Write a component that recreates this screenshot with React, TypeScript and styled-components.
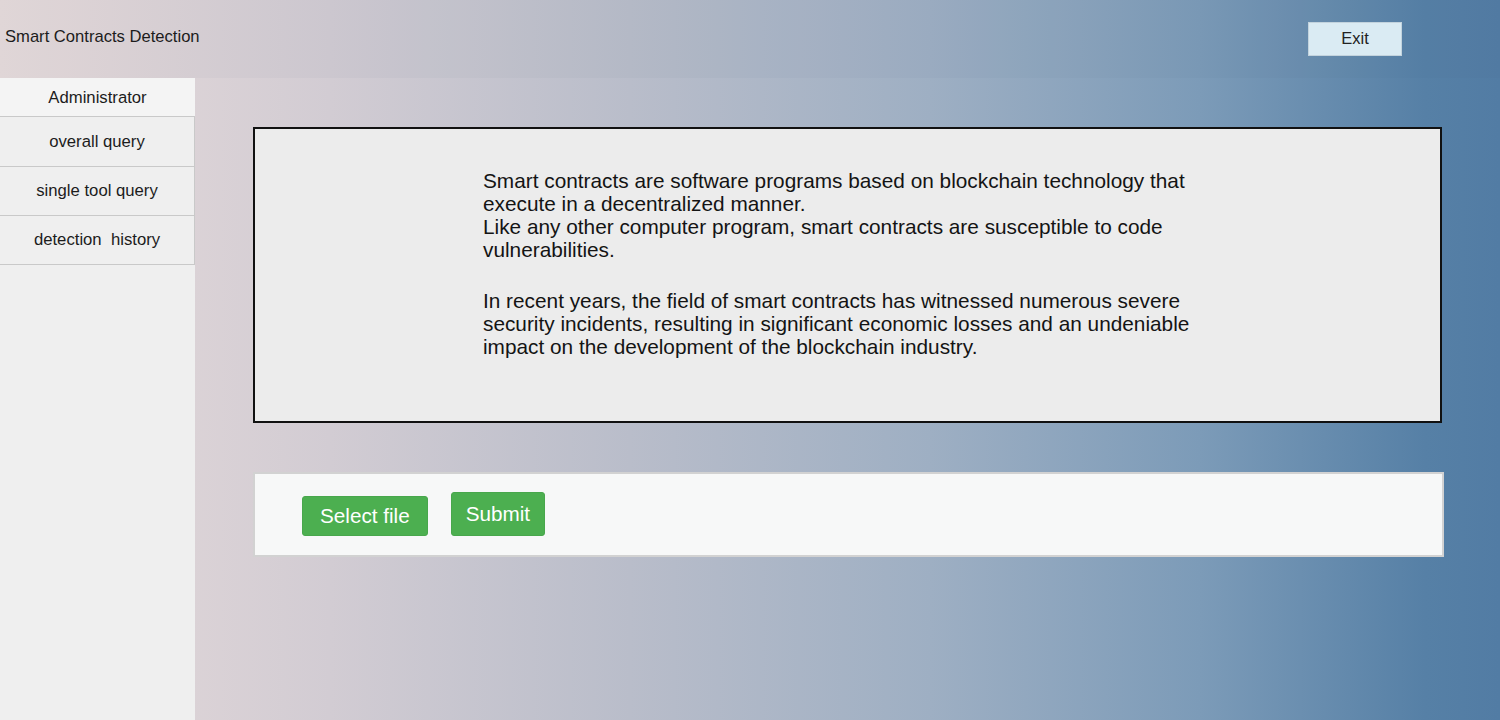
import * as React from 'react';
import styled, { createGlobalStyle } from 'styled-components';

const GlobalStyle = createGlobalStyle`
  html, body {
    margin: 0;
    padding: 0;
    height: 100%;
  }
  body {
    font-family: 'Liberation Sans', Arial, sans-serif;
    color: #1c1c1c;
  }
  #root {
    height: 100%;
  }
`;

const Page = styled.div`
  height: 720px;
  display: flex;
  flex-direction: column;
  background: linear-gradient(
    to right,
    #e7dbdb 0%,
    #d2ccd3 22%,
    #b9bdca 42%,
    #9eafc3 62%,
    #7c9bb8 80%,
    #5680a6 95%,
    #527ca4 100%
  );
  overflow: hidden;
`;

const TopBar = styled.header`
  height: 78px;
  flex-shrink: 0;
  display: flex;
  align-items: center;
  justify-content: space-between;
  padding: 0 98px 0 5px;
  background: rgba(70, 80, 110, 0.035);
`;

const Title = styled.div`
  font-size: 16.6px;
  margin-top: -5px;
`;

const ExitButton = styled.button`
  width: 94px;
  height: 34px;
  margin-top: -1px;
  background: #daebf3;
  border: 1px solid #c3d3dd;
  font-family: inherit;
  font-size: 16.5px;
  color: #222;
  cursor: pointer;
`;

const Body = styled.div`
  flex: 1;
  display: flex;
  min-height: 0;
`;

const Sidebar = styled.nav`
  width: 195px;
  flex-shrink: 0;
  background: #efefef;
  display: flex;
  flex-direction: column;
`;

const SideHead = styled.div`
  height: 38px;
  padding-top: 2px;
  box-sizing: border-box;
  display: flex;
  align-items: center;
  justify-content: center;
  background: #f4f4f4;
  font-size: 16.7px;
`;

const SideItem = styled.div`
  height: 48px;
  display: flex;
  align-items: center;
  justify-content: center;
  border-top: 1px solid #c9c9c9;
  border-right: 1px solid #c9c9c9;
  font-size: 16.7px;
  white-space: pre;
  cursor: pointer;
  &:first-child {
    height: 49px;
  }
  &:last-child {
    border-bottom: 1px solid #c9c9c9;
  }
`;

const Main = styled.main`
  flex: 1;
  padding: 49px 58px 0 58px;
  display: flex;
  flex-direction: column;
  gap: 49px;
`;

const InfoBox = styled.section`
  height: 296px;
  box-sizing: border-box;
  border: 2px solid #111;
  background: #ececec;
  padding: 40px 0 0 228px;
`;

const InfoText = styled.div`
  width: 720px;
  font-size: 20.8px;
  line-height: 23px;
  color: #141414;
`;

const Para = styled.p`
  margin: 0 0 28px;
`;

const UploadPanel = styled.section`
  height: 85px;
  box-sizing: border-box;
  margin-right: -2px;
  border: 2px solid #d2d2d2;
  background: #f7f8f8;
  display: flex;
  align-items: center;
  gap: 23px;
  padding-left: 47px;
`;

const GreenButton = styled.button<{ $tall?: boolean }>`
  height: ${p => (p.$tall ? '44px' : '40px')};
  margin-top: ${p => (p.$tall ? '-1px' : '2px')};
  padding: 0 ${p => (p.$tall ? '14px' : '17px')};
  background: #4caf50;
  border: 1px solid #48a74c;
  border-radius: 3px;
  color: #fff;
  font-family: inherit;
  font-size: 20.7px;
  cursor: pointer;
`;

const menu = ['overall query', 'single tool query', 'detection  history'];

export default function App() {
  return (
    <Page>
      <GlobalStyle />
      <TopBar>
        <Title>Smart Contracts Detection</Title>
        <ExitButton>Exit</ExitButton>
      </TopBar>
      <Body>
        <Sidebar>
          <SideHead>Administrator</SideHead>
          <div>
            {menu.map(m => (
              <SideItem key={m}>{m}</SideItem>
            ))}
          </div>
        </Sidebar>
        <Main>
          <InfoBox>
            <InfoText>
              <Para>
                Smart contracts are software programs based on blockchain technology that
                execute in a decentralized manner.
                <br />
                Like any other computer program, smart contracts are susceptible to code
                vulnerabilities.
              </Para>
              <Para>
                In recent years, the field of smart contracts has witnessed numerous severe
                security incidents, resulting in significant economic losses and an undeniable
                impact on the development of the blockchain industry.
              </Para>
            </InfoText>
          </InfoBox>
          <UploadPanel>
            <GreenButton>Select file</GreenButton>
            <GreenButton $tall>Submit</GreenButton>
          </UploadPanel>
        </Main>
      </Body>
    </Page>
  );
}
